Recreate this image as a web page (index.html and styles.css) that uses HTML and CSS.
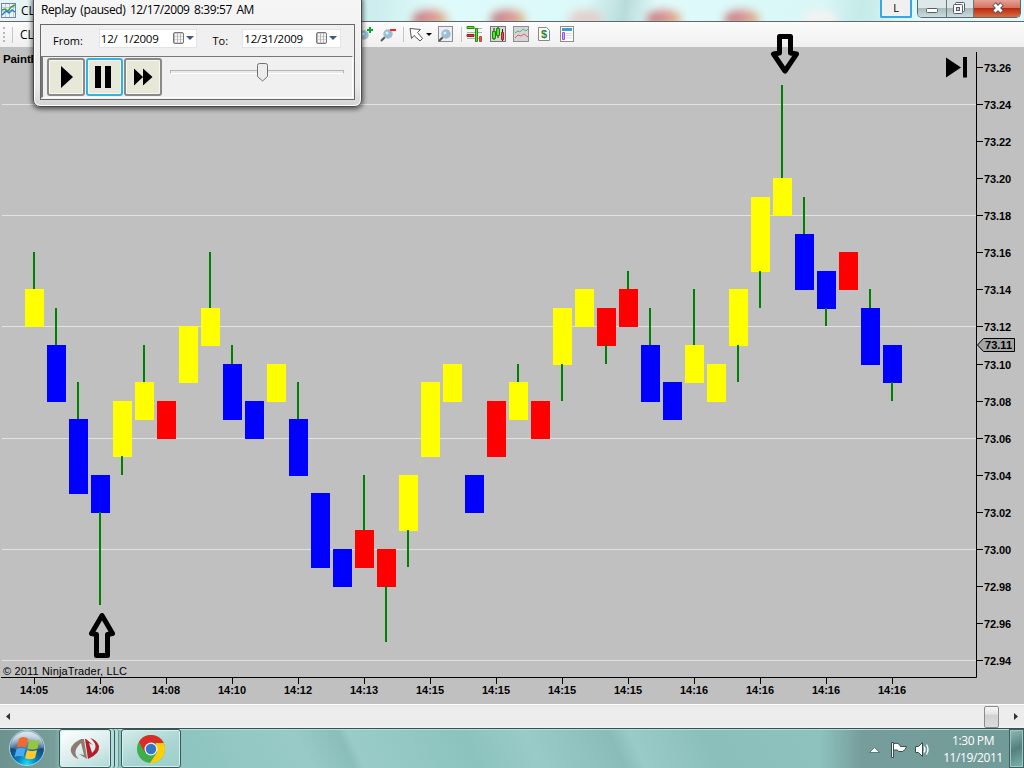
FILE: index.html
```html
<!DOCTYPE html>
<html lang="en">
<head>
  <meta charset="UTF-8" />
  <title>NinjaTrader - Replay</title>
  <link rel="stylesheet" href="styles.css">
</head>
<body>

  <div class="titlebar">
    <svg class="app-icon" width="15" height="15" viewBox="0 0 15 15">
      <rect x=".5" y=".5" width="14" height="14" fill="#edf3fa" stroke="#7186a5"/>
      <path d="M4.500 1v13M8.500 1v13M12.500 1v13M1 4.500h13M1 8.500h13" stroke="#bdcbe0"/>
      <path d="M1 7l3-1 3 2 3-4 4-2" fill="none" stroke="#38a13c" stroke-width="1.500"/>
      <path d="M1 12l4-4 3 2 3-3 3 2" fill="none" stroke="#327fc4" stroke-width="1.500"/>
    </svg>
    <span class="app-name">CL</span>
    <div class="glass">
      <i class="blob"></i><i class="blob"></i><i class="blob pale"></i><i class="blob"></i><i class="blob"></i><i class="blob white"></i>
    </div>
    <button class="link-btn">L</button>
    <div class="win-btns">
      <button><svg width="28" height="17"><rect x="8.500" y="8.500" width="11" height="4" rx="1" fill="#fff" stroke="#555b6b"/></svg></button>
      <button><svg width="26" height="17"><g fill="#fff" stroke="#555b6b"><rect x="8.500" y="2.500" width="9" height="9" rx="1"/><rect x="6.500" y="4.500" width="9" height="9" rx="1"/><rect x="9.500" y="7.500" width="3" height="3" fill="#c6d3d6"/></g></svg></button>
      <button class="close"><svg width="46" height="17"><path d="M20 4l8 8M28 4l-8 8" stroke="#55565f" stroke-width="5"/><path d="M20.500 4.500l7 7M27.500 4.500l-7 7" stroke="#fff" stroke-width="3"/></svg></button>
    </div>
  </div>

  <div class="toolbar">
    <i class="grip"></i><i class="sep"></i><span class="instrument">CL</span>
    <svg class="tools" width="230" height="22" viewBox="350 24 230 22">
      <defs>
        <g id="lens">
          <path d="M-3 3l-4 4" stroke="#555" stroke-width="2"/>
          <circle r="4" fill="#8fc0e2" stroke="#b2bac0" stroke-width="1.500"/>
          <circle cx="-1" cy="-1" r="1.500" fill="#d9effc"/>
        </g>
      </defs>
      <use href="#lens" x="364" y="35"/>
      <path d="M367 30h6M370 27v6" stroke="#00ac2a" stroke-width="2"/>
      <use href="#lens" x="388" y="34"/>
      <path d="M390 30h6" stroke="#f22" stroke-width="2"/>
      <path d="M403.500 27v15M461.500 27v15" stroke="#c4c4c4"/>
      <path d="M410 28.500l10.500 1-3 3 5 6-2.500 2.500-6-5.500-2.500 3z" fill="#fff" stroke="#555"/>
      <path d="M426 33h6l-3 3z"/>
      <rect x="438.500" y="26.500" width="14" height="15" fill="#eceff2" stroke="#8d8d94"/>
      <use href="#lens" x="446" y="34"/>
      <path d="M467 28.500h15M467 32.500h15M467 38.500h15" stroke="#a8b3a8"/>
      <path d="M467 26.500h7v2h-7z" fill="#57ec12" stroke="#258a10"/>
      <path d="M467 34.500h7v2h-7z" fill="#f22c20" stroke="#982020"/>
      <path d="M475.500 28.500h2v13h-2z" fill="#57dc26" stroke="#258a10"/>
      <path d="M479.500 36.500h2v5h-2z" fill="#ff4b4b" stroke="#b44"/>
      <rect x="490.500" y="26.500" width="15" height="15" fill="#d6d9d3" stroke="#777"/>
      <path d="M494 28v12M498 27v11M502.500 29v12" stroke="#222"/>
      <path d="M492.500 31.500h3v7h-3zM496.500 28.500h3v7h-3z" fill="#45f021" stroke="#287e1b"/>
      <path d="M501.500 32.500h2v7h-2z" fill="#ff4949" stroke="#9d2525"/>
      <rect x="513.500" y="26.500" width="15" height="15" fill="#d5d5d7" stroke="#8d8d94"/>
      <path d="M515 33l3-2 2 1 3-3 3 2 2-2" fill="none" stroke="#47b985"/>
      <path d="M515 38l3-3 3 1 3-2 4 3" fill="none" stroke="#e25f62"/>
      <path d="M538.500 27.500h8l3 3v10h-11z" fill="#fff" stroke="#888"/>
      <text class="dollar" x="544" y="38">$</text>
      <rect x="560.500" y="26.500" width="13" height="15" fill="#fff" stroke="#8d8d94"/>
      <path d="M562 29.500h10" stroke="#3e9bd5" stroke-width="3"/>
      <path d="M562.500 32.500h2v7h-2z" fill="#d6a9ff" stroke="#9a4ff2"/>
      <path d="M566 33.500h6M566 35.500h6M566 38h6" stroke="#d3dae8"/>
    </svg>
  </div>

  <svg class="chart" id="chart" width="1024" height="657" viewBox="0 47 1024 657">
    <text class="indicator" x="3" y="63">PaintBar</text>
    <g id="grid"></g>
    <g id="candles"></g>
    <path class="axis" d="M1 677.500H976.500V52"/>
    <g id="labels"></g>
    <path class="tag" d="M977.500 345l6-6.500h31v13h-31z"/>
    <text class="lbl" x="985" y="349" textLength="27">73.11</text>
    <text class="copy" x="3" y="675" textLength="124">© 2011 NinjaTrader, LLC</text>
    <path d="M946 57.500l15 10-15 10zM963 57h4v20.500h-4z"/>
    <path class="arrow" d="M779.500 36.500h11v16.500l6 1-11.500 17-11.500-17 6-1z"/>
    <path class="arrow" d="M96.500 655.500h11v-21l5-1-10.500-18-10.500 18 5 1z"/>
  </svg>

  <div class="scrollbar">
    <svg width="17" height="22"><path d="M10 7v7l-4-3.500z" fill="#333"/></svg>
    <i class="thumb"></i>
    <svg width="17" height="22"><path d="M7 7v7l4-3.500z" fill="#333"/></svg>
  </div>

  <div class="taskbar">
    <svg class="start" width="54" height="40" viewBox="0 728 54 40">
      <defs>
        <radialGradient id="orb" cx=".5" cy=".95" r=".8">
          <stop offset="0" stop-color="#18e0ff"/><stop offset=".35" stop-color="#087ebd"/><stop offset=".75" stop-color="#164575"/><stop offset="1" stop-color="#7e9fbe"/>
        </radialGradient>
        <linearGradient id="shine" x2="0" y2="1"><stop offset="0" stop-color="#fff" stop-opacity=".75"/><stop offset="1" stop-color="#fff" stop-opacity=".15"/></linearGradient>
      </defs>
      <circle cx="27" cy="748" r="17.500" fill="url(#orb)" stroke="#a9d0de"/>
      <path d="M10.500 748a16.500 16.500 0 0 1 33 0q-16 4-33 0z" fill="url(#shine)"/>
      <path d="M19 738.500q4-3 9 0l-2 9q-4-2-9 0z" fill="#f26a2b"/>
      <path d="M29.500 739.500q5 2.500 10 0l-2 9q-5 2-10 0z" fill="#93c83e"/>
      <path d="M16.500 749q5-2 9 0l-2 8q-4-2-9 0z" fill="#4aaaf0"/>
      <path d="M27 750q5 2 10 0l-2 8q-5 2.500-10 0z" fill="#ffc92c"/>
    </svg>
    <div class="task active">
      <svg width="30" height="24" viewBox="0 0 30 24">
        <path d="M11 2Q-3 9 2 17q2 4 7 5-8-7 2-16l3 12-5-1 8 5-3-20z" fill="#8d7c70"/>
        <path d="M15 2l3 20Q30 17 29 9 27 3 20 1q10 8 2 15L19 6l4 2-7-6z" fill="#b51d27"/>
      </svg>
    </div>
    <i class="stack"></i><i class="stack last"></i>
    <div class="task">
      <svg width="30" height="30" viewBox="-15 -15 30 30">
        <circle r="14" fill="#3fae49"/>
        <path d="M-12.100-7A14 14 0 0 1 12.700-6H0L-6 3.500z" fill="#dc2c27"/>
        <path d="M12.700-6A14 14 0 0 1-1 14L6 3.500 5-6z" fill="#fbd00b"/>
        <circle r="6.500" fill="#eef4f3"/><circle r="5.200" fill="#3277c6"/>
      </svg>
    </div>
    <div class="tray">
      <svg width="62" height="20" viewBox="869 738 62 20">
        <path d="M869.500 751.500h10l-5-5z" fill="#fff" stroke="#4a6665" stroke-width=".8"/>
        <path d="M891.500 741.500h2v15h-2z" fill="#fff" stroke="#33504f"/>
        <path d="M893.500 742.500q4-1 6 1l1 2h6q-1 4-4 5h-4l-1-1.500h-4z" fill="#fff" stroke="#33504f"/>
        <path d="M915.500 745.500h3l4-4v14l-4-4h-3z" fill="#fff" stroke="#33504f"/>
        <path d="M924 745.500q2 3 0 6M926.500 743.500q3 5 0 10" fill="none" stroke="#fff" stroke-width="1.300"/>
      </svg>
      <div class="clock"><span>1:30 PM</span><span>11/19/2011</span></div>
    </div>
    <i class="show-desktop"></i>
  </div>

  <div class="replay">
    <div class="replay-title">Replay (paused) 12/17/2009 8:39:57 AM</div>
    <div class="replay-body">
      <div class="dates">
        <label>From:</label>
        <div class="date"><span>12/&nbsp; 1/2009</span><i class="cal"></i><i class="caret"></i></div>
        <label>To:</label>
        <div class="date"><span>12/31/2009</span><i class="cal"></i><i class="caret"></i></div>
      </div>
      <div class="controls">
        <button><svg width="34" height="34"><path d="M12 6l12 11-12 11z"/></svg></button>
        <button class="on"><svg width="32" height="34"><path d="M7 6h6v22H7zM17 6h6v22h-6z"/></svg></button>
        <button><svg width="34" height="34"><path d="M8 8.500l9 8.500-9 8.500zM17 8.500l9.500 8.500-9.500 8.500z"/></svg></button>
        <div class="slider">
          <svg width="11" height="19"><path d="M2.500.5h6q2 0 2 2v11l-5 4.500-5-4.500v-11q0-2 2-2z" fill="#ececec" stroke="#707070"/></svg>
        </div>
      </div>
    </div>
  </div>

  <script>
    // prices are in ticks relative to 73.00: [colour, top, bottom, high, low]
    const bars = [
      ['y',14,12,16], ['b',11,8,13], ['b',7,3,9], ['b',4,2,4,-3], ['y',8,5,8,4],
      ['y',9,7,11], ['r',8,6], ['y',12,9], ['y',13,11,16], ['b',10,7,11],
      ['b',8,6], ['y',10,8], ['b',7,4,9], ['b',3,-1], ['b',0,-2],
      ['r',1,-1,4], ['r',0,-2,0,-5], ['y',4,1,4,-1], ['y',9,5], ['y',10,8],
      ['b',4,2], ['r',8,5], ['y',9,7,10], ['r',8,6], ['y',13,10,13,8],
      ['y',14,12], ['r',13,11,13,10], ['r',14,12,15], ['b',11,8,13], ['b',9,7],
      ['y',11,9,14], ['y',10,8], ['y',14,11,14,9], ['y',19,15,19,13], ['y',20,18,25],
      ['b',17,14,19], ['b',15,13,15,12], ['r',16,14], ['b',13,10,14], ['b',11,9,11,8]
    ];
    const fills = { y: '#ffff00', b: '#0000ff', r: '#ff0000' };
    const times = ['14:05','14:06','14:08','14:10','14:12','14:13','14:15','14:15','14:15','14:15','14:16','14:16','14:16','14:16'];
    const yOf = t => Math.floor(549.45 - t * 18.54);

    let candles = '';
    bars.forEach(([c, top, bottom, high = top, low = bottom], i) => {
      const x = 25 + i * 22;
      const y1 = yOf(top), y2 = yOf(bottom) + 1;
      candles += `<rect x="${x}" y="${y1}" width="19" height="${y2 - y1}" fill="${fills[c]}"/>`;
      if (high > top) candles += `<rect x="${x + 8}" y="${yOf(high)}" width="2" height="${y1 - yOf(high)}" fill="#008000"/>`;
      if (low < bottom) candles += `<rect x="${x + 8}" y="${y2 - 1}" width="2" height="${yOf(low) + 1 - y2}" fill="#008000"/>`;
    });
    document.getElementById('candles').innerHTML = candles;

    let grid = '', labels = '';
    for (let t = 26; t >= -6; t -= 2) {
      const y = yOf(t);
      if (t % 6 === 0) grid += `<path class="gridline" d="M2 ${y + .5}H976"/>`;
      labels += `<path class="axis" d="M977 ${y + .5}h6"/><text class="lbl" x="984" y="${y + 5}" textLength="27">${(73 + t / 100).toFixed(2)}</text>`;
    }
    document.getElementById('grid').innerHTML = grid;
    times.forEach((t, i) => {
      const x = 34 + i * 66;
      labels += `<path class="axis" d="M${x + .5} 678v6"/><text class="lbl" x="${x - 14}" y="694" textLength="28">${t}</text>`;
    });
    document.getElementById('labels').innerHTML = labels;
  </script>
</body>
</html>
```
FILE: styles.css
```css
* {
  box-sizing: border-box;
}

body {
  margin: 0;
  width: 1024px;
  height: 768px;
  overflow: hidden;
  display: flex;
  flex-direction: column;
  background: #c0c0c0;
  font-family: "Open Sans", sans-serif;
  font-size: 12px;
  color: #000;
}

button {
  padding: 0;
  margin: 0;
  font: inherit;
}

svg {
  display: block;
  flex: none;
}

/* main window */
.titlebar {
  height: 22px;
  flex: none;
  display: flex;
  align-items: flex-start;
  border-bottom: 1px solid #62696a;
  background: linear-gradient(100deg, #e9f4f5 0, #cdeeee 37%, #dffafa 42%, #dcf9f9 57%, #b8dcda 61%, #e0fafa 64%, #d9f7f7 80%, #c5eae8 84%, #e0fafa 90%);
}

.app-icon {
  margin: 3px 0 0 1px;
}

.app-name {
  width: 20px;
  margin: 2px 0 0 5px;
}

.glass {
  flex: 1;
  height: 21px;
  overflow: hidden;
  display: flex;
  align-items: flex-end;
  gap: 44px;
  padding-left: 372px;
  margin-right: 2px;
}

.blob {
  flex: none;
  width: 34px;
  height: 15px;
  margin-bottom: -4px;
  border-radius: 50% 50% 0 0;
  background: linear-gradient(90deg, #c0777b, #dc9494 60%, #dcbd82);
  filter: blur(4px);
}

.pale {
  background: #e2cfcb;
}

.white {
  background: #f4f1f1;
}

.link-btn {
  width: 32px;
  height: 18px;
  border: 2px solid #38a9e0;
  border-top: 0;
  background: #f0f0f0;
  border-radius: 0 0 2px 2px;
  font-size: 11px;
  line-height: 14px;
}

.win-btns {
  display: flex;
  height: 18px;
  margin: 0 3px 0 5px;
  border: 1px solid #5e686c;
  border-top: 0;
  border-radius: 0 0 5px 5px;
  overflow: hidden;
}

.win-btns button {
  border: 0;
  border-right: 1px solid #6c7779;
  background: linear-gradient(#dfe8e9 45%, #a9bbbd 50%, #cbdcdd);
}

.win-btns .close {
  border: 0;
  background: linear-gradient(#e4a295, #d5725f 45%, #b82b12 50%, #dc6b40);
}

.toolbar {
  height: 25px;
  flex: none;
  display: flex;
  align-items: center;
  background: linear-gradient(#fcfcfc, #efefef);
}

.grip {
  width: 3px;
  height: 15px;
  margin-left: 3px;
  border-left: 2px dotted #b9b9b9;
}

.sep {
  width: 1px;
  height: 16px;
  margin-left: 6px;
  background: #c4c4c4;
}

.instrument {
  width: 330px;
  margin-left: 7px;
}

.dollar {
  font: bold 11px "Liberation Sans", sans-serif;
  text-anchor: middle;
  fill: #25872b;
}

/* chart */
.chart {
  overflow: visible;
  font-family: "Liberation Sans", Arial, sans-serif;
}

.lbl {
  font-size: 11px;
  font-weight: bold;
}

.indicator {
  font-size: 11.5px;
  font-weight: bold;
  letter-spacing: -.1px;
}

.copy {
  font-size: 11px;
}

.axis {
  fill: none;
  stroke: #000;
}

.gridline {
  stroke: #e2e2e2;
}

.tag {
  fill: #a5a5a5;
  stroke: #000;
}

.arrow {
  fill: none;
  stroke: #000;
  stroke-width: 5;
  stroke-linejoin: round;
}

.scrollbar {
  height: 24px;
  flex: none;
  display: flex;
  align-items: center;
  border-top: 1px solid #fff;
  background: linear-gradient(#e4e4e4, #ededed 3px, #ececec 20px, #f3f3f3);
}

.thumb {
  width: 15px;
  height: 22px;
  margin: 0 8px 0 auto;
  border: 1px solid #8b8b8b;
  border-radius: 2px;
  background: linear-gradient(#f5f5f5, #e5e5e8 35%, #d0d0d3 40%, #dcdcdf);
}

/* taskbar */
.taskbar {
  height: 40px;
  flex: none;
  display: flex;
  border-top: 1px solid #394f51;
  box-shadow: inset 0 1px #b8dedb;
  background: linear-gradient(90deg, #6c9390 0, #789e9b 55px, transparent 64px, transparent 820px, #769d9b 862px, #719b98),
    linear-gradient(65deg, #8fc5c1 20%, #98cbc8 30%, #8abeba 34%, #99ccc9 35%, #8cc3bf 46%, #99cbc8 52%, #8abdb9 60%, #99ccc9 62%, #8bbfbb 69%, #8fc7c3);
}

.start {
  margin-top: -1px;
}

.task {
  width: 60px;
  height: 39px;
  display: flex;
  align-items: center;
  justify-content: center;
  border: 1px solid #345a59;
  border-radius: 3px;
  box-shadow: inset 0 0 0 1px #d9efed;
  background: linear-gradient(155deg, #d5ebea, #a9d5d2 55%, #9bcfca);
}

.task.active {
  width: 52px;
  margin-left: 5px;
  background: linear-gradient(155deg, #fff, #d6ebea 60%, #afd9d6);
}

.stack {
  width: 4px;
  height: 39px;
  border-right: 1px solid #345a59;
  border-radius: 0 3px 3px 0;
  background: #b5dcda;
}

.stack.last {
  margin-right: 2px;
  border-color: #6a9693;
}

.tray {
  display: flex;
  align-items: center;
  gap: 9px;
  margin-left: auto;
}

.clock {
  width: 66px;
  display: flex;
  flex-direction: column;
  align-items: center;
  color: #fff;
  line-height: 17px;
  letter-spacing: -.4px;
  white-space: nowrap;
}

.show-desktop {
  width: 15px;
  margin-left: 3px;
  border: 1px solid #3c6260;
  box-shadow: inset 0 0 0 1px #9fc6c3;
  background: linear-gradient(155deg, #91b9b6, #547f7c 50%, #79b4ae);
}

/* replay window floats over the main one */
.replay {
  position: absolute;
  left: 33px;
  top: -6px;
  width: 329px;
  height: 113px;
  padding: 6px 6px 0 7px;
  border: 1px solid #4d4d4d;
  border-radius: 7px;
  background: linear-gradient(#f6f6f6, #f4f4f4 20px, #eaeaea 90px, #d4d4d4);
  box-shadow: inset 0 0 0 1px #fff, 0 1px 5px 1px rgba(0, 0, 0, .6);
}

.replay-title {
  height: 23px;
  line-height: 18px;
  letter-spacing: -.4px;
  word-spacing: 1.8px;
  white-space: nowrap;
}

.replay-body {
  width: 315px;
  height: 76px;
  margin-left: -1px;
  border: 1px solid #686868;
  background: #f0f0f0;
}

.dates {
  height: 31px;
  display: flex;
  align-items: center;
  padding-left: 12px;
}

.dates label {
  width: 46px;
  font-size: 11px;
}

.dates label:nth-of-type(2) {
  width: 30px;
  margin-left: 2px;
}

.date {
  width: 99px;
  height: 19px;
  display: flex;
  align-items: center;
  border: 1px solid #e0e3ea;
  background: #fff;
  padding-left: 1px;
  margin: -5px 13px 0 0;
  letter-spacing: -.25px;
}

.date span {
  width: 72px;
  white-space: nowrap;
  font-size: 11.5px;
}

.cal {
  width: 11px;
  height: 12px;
  border: 1px solid #777;
  border-radius: 2px;
  background: repeating-linear-gradient(#aaa6 0 1px, transparent 1px 3px), repeating-linear-gradient(90deg, #bbb 0 1px, #f3f3f3 1px 3px);
}

.caret {
  margin-left: 2px;
  border: 4px solid transparent;
  border-top-color: #41577c;
  border-bottom: 0;
}

.controls {
  height: 42px;
  display: flex;
  align-items: center;
  gap: 1px;
  padding-left: 4px;
  border: 1px solid #777;
  border-width: 1px 1px 1px 2px;
  border-right-color: #fff;
  border-bottom-color: #fff;
  margin-right: 1px;
}

.controls button {
  width: 38px;
  height: 38px;
  border: 2px solid #8a8a8a;
  border-radius: 3px;
  box-shadow: inset 0 0 0 1px #f7f7f0;
  background: #e7e8d8;
}

.controls .on {
  width: 37px;
  border-color: #31b3e5;
}

.slider {
  width: 174px;
  height: 4px;
  margin: -10px 0 0 7px;
  border: 1px solid #b5b5b5;
  border-bottom-color: #fff;
  background: #e8eaea;
}

.slider svg {
  margin: -8px 0 0 86px;
}
```
